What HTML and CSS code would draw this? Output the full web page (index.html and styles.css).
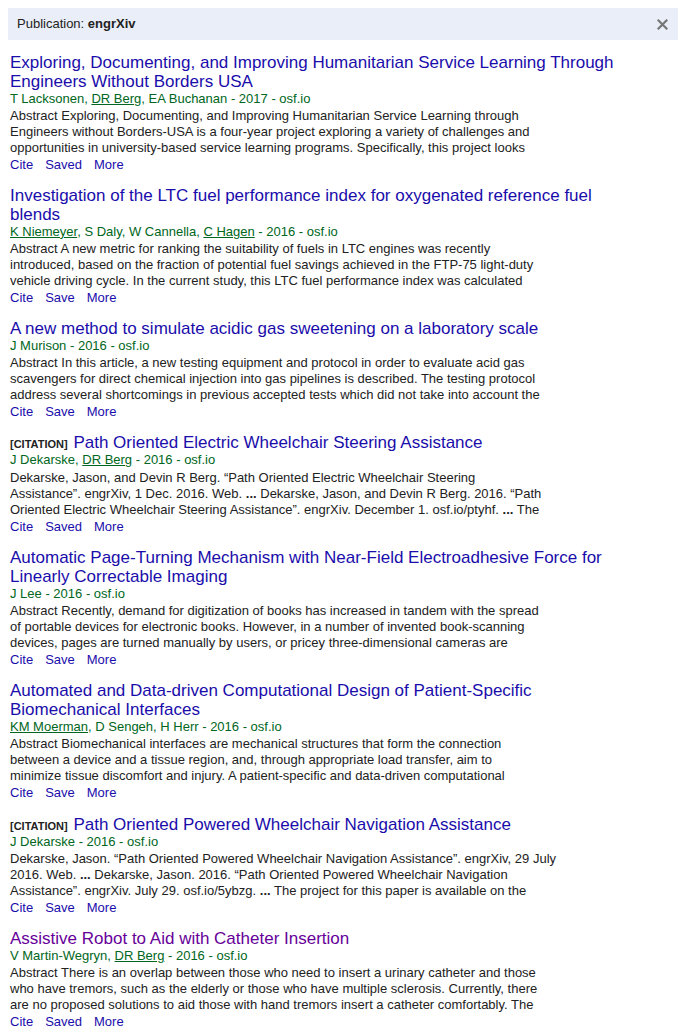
FILE: index.html
```html
<!DOCTYPE html>
<html>
<head>
<meta charset="utf-8">
<link rel="stylesheet" href="styles.css">
</head>
<body>
<div class="filter-bar">
  <span class="filter-text">Publication: <b>engrXiv</b></span>
  <svg class="close" width="11" height="11" viewBox="0 0 11 11"><path d="M1.5 1.5 L9.5 9.5 M9.5 1.5 L1.5 9.5" stroke="#777" stroke-width="2.2" stroke-linecap="square"/></svg>
</div>

<div class="results">
  <div class="result">
    <h3 class="title"><a href="#">Exploring, Documenting, and Improving Humanitarian Service Learning Through<br>Engineers Without Borders USA</a></h3>
    <div class="authors">T Lacksonen, <a href="#">DR Berg</a>, EA Buchanan - 2017 - osf.io</div>
    <div class="snippet">Abstract Exploring, Documenting, and Improving Humanitarian Service Learning through<br>Engineers without Borders-USA is a four-year project exploring a variety of challenges and<br>opportunities in university-based service learning programs. Specifically, this project looks</div>
    <div class="links"><a href="#">Cite</a><a href="#">Saved</a><a href="#">More</a></div>
  </div>

  <div class="result">
    <h3 class="title"><a href="#">Investigation of the LTC fuel performance index for oxygenated reference fuel<br>blends</a></h3>
    <div class="authors"><a href="#">K Niemeyer</a>, S Daly, W Cannella, <a href="#">C Hagen</a> - 2016 - osf.io</div>
    <div class="snippet">Abstract A new metric for ranking the suitability of fuels in LTC engines was recently<br>introduced, based on the fraction of potential fuel savings achieved in the FTP-75 light-duty<br>vehicle driving cycle. In the current study, this LTC fuel performance index was calculated</div>
    <div class="links"><a href="#">Cite</a><a href="#">Save</a><a href="#">More</a></div>
  </div>

  <div class="result">
    <h3 class="title"><a href="#">A new method to simulate acidic gas sweetening on a laboratory scale</a></h3>
    <div class="authors">J Murison - 2016 - osf.io</div>
    <div class="snippet">Abstract In this article, a new testing equipment and protocol in order to evaluate acid gas<br>scavengers for direct chemical injection into gas pipelines is described. The testing protocol<br>address several shortcomings in previous accepted tests which did not take into account the</div>
    <div class="links"><a href="#">Cite</a><a href="#">Save</a><a href="#">More</a></div>
  </div>

  <div class="result">
    <h3 class="title"><span class="tag">[CITATION]</span> <a href="#">Path Oriented Electric Wheelchair Steering Assistance</a></h3>
    <div class="authors">J Dekarske, <a href="#">DR Berg</a> - 2016 - osf.io</div>
    <div class="snippet cit">Dekarske, Jason, and Devin R Berg. “Path Oriented Electric Wheelchair Steering<br>Assistance”. engrXiv, 1 Dec. 2016. Web. <b>...</b> Dekarske, Jason, and Devin R Berg. 2016. “Path<br>Oriented Electric Wheelchair Steering Assistance”. engrXiv. December 1. osf.io/ptyhf. <b>...</b> The</div>
    <div class="links"><a href="#">Cite</a><a href="#">Saved</a><a href="#">More</a></div>
  </div>

  <div class="result">
    <h3 class="title"><a href="#">Automatic Page-Turning Mechanism with Near-Field Electroadhesive Force for<br>Linearly Correctable Imaging</a></h3>
    <div class="authors">J Lee - 2016 - osf.io</div>
    <div class="snippet">Abstract Recently, demand for digitization of books has increased in tandem with the spread<br>of portable devices for electronic books. However, in a number of invented book-scanning<br>devices, pages are turned manually by users, or pricey three-dimensional cameras are</div>
    <div class="links"><a href="#">Cite</a><a href="#">Save</a><a href="#">More</a></div>
  </div>

  <div class="result">
    <h3 class="title"><a href="#">Automated and Data-driven Computational Design of Patient-Specific<br>Biomechanical Interfaces</a></h3>
    <div class="authors"><a href="#">KM Moerman</a>, D Sengeh, H Herr - 2016 - osf.io</div>
    <div class="snippet">Abstract Biomechanical interfaces are mechanical structures that form the connection<br>between a device and a tissue region, and, through appropriate load transfer, aim to<br>minimize tissue discomfort and injury. A patient-specific and data-driven computational</div>
    <div class="links"><a href="#">Cite</a><a href="#">Save</a><a href="#">More</a></div>
  </div>

  <div class="result">
    <h3 class="title"><span class="tag">[CITATION]</span> <a href="#">Path Oriented Powered Wheelchair Navigation Assistance</a></h3>
    <div class="authors">J Dekarske - 2016 - osf.io</div>
    <div class="snippet cit">Dekarske, Jason. “Path Oriented Powered Wheelchair Navigation Assistance”. engrXiv, 29 July<br>2016. Web. <b>...</b> Dekarske, Jason. 2016. “Path Oriented Powered Wheelchair Navigation<br>Assistance”. engrXiv. July 29. osf.io/5ybzg. <b>...</b> The project for this paper is available on the</div>
    <div class="links"><a href="#">Cite</a><a href="#">Save</a><a href="#">More</a></div>
  </div>

  <div class="result">
    <h3 class="title"><a href="#" class="visited">Assistive Robot to Aid with Catheter Insertion</a></h3>
    <div class="authors">V Martin-Wegryn, <a href="#">DR Berg</a> - 2016 - osf.io</div>
    <div class="snippet">Abstract There is an overlap between those who need to insert a urinary catheter and those<br>who have tremors, such as the elderly or those who have multiple sclerosis. Currently, there<br>are no proposed solutions to aid those with hand tremors insert a catheter comfortably. The</div>
    <div class="links"><a href="#">Cite</a><a href="#">Saved</a><a href="#">More</a></div>
  </div>
</div>
</body>
</html>
```

FILE: styles.css
```css
html, body {
  margin: 0;
  padding: 0;
  background: #fff;
}
body {
  padding: 8px 5px 0 8px;
  font-family: "Liberation Sans", Arial, sans-serif;
  color: #222;
  font-size: 13px;
}
.filter-bar {
  display: flex;
  align-items: center;
  justify-content: space-between;
  height: 32px;
  background: #e9eef8;
  padding: 0 10px 0 9px;
  line-height: 16px;
}
.filter-text {
  font-size: 13px;
  color: #222;
}
.filter-text b {
  font-weight: bold;
}
.close {
  display: block;
}
.results {
  padding: 12.5px 0 0 2px;
}
.result {
  margin-bottom: 13.25px;
}
.title {
  margin: 0;
  font-size: 17px;
  font-weight: normal;
  line-height: 19px;
  white-space: nowrap;
}
.title a {
  color: #1a0dab;
  text-decoration: none;
}
.title a.visited {
  color: #660099;
}
.tag {
  font-size: 11px;
  font-weight: bold;
  line-height: 1;
  color: #222;
  margin-right: 1px;
}
.authors {
  color: #006621;
  line-height: 16px;
  white-space: nowrap;
}
.authors a {
  color: #006621;
  text-decoration: underline;
}
.snippet {
  margin-top: 1px;
  line-height: 16px;
  color: #222;
  white-space: nowrap;
}
.snippet.cit {
  margin-top: 1.5px;
}
.snippet b {
  font-weight: bold;
}
.links {
  margin-top: 1px;
  line-height: 16px;
  display: flex;
  gap: 12px;
}
.links a {
  color: #1a0dab;
  text-decoration: none;
}
```
